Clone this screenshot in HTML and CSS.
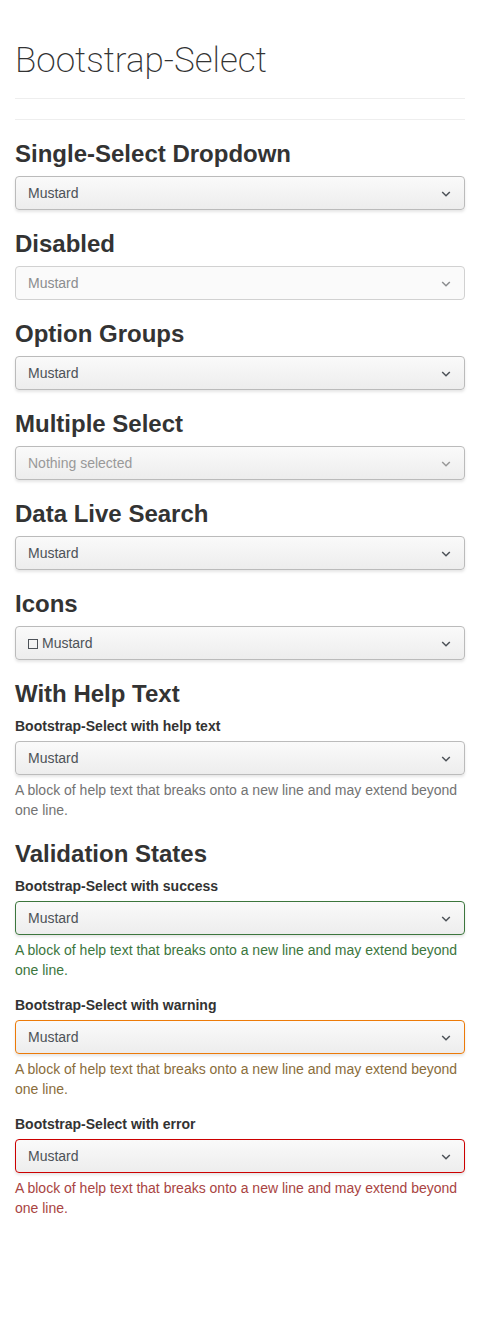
FILE: index.html
```
<!DOCTYPE html>
<html lang="en">
<head>
<meta charset="utf-8">
<meta name="viewport" content="width=device-width, initial-scale=1">
<title>Bootstrap-Select</title>
<link rel="stylesheet" href="styles.css">
</head>
<body>
<svg class="sprite" aria-hidden="true">
  <symbol id="chevron" viewBox="0 0 10 10"><path d="M1.2 3 5 6.8 8.8 3" fill="none" stroke="currentColor" stroke-width="1.5"/></symbol>
</svg>
<main class="container">
  <header class="page-header"><h1 class="title">Bootstrap-Select</h1></header>
  <hr class="rule">

  <h2 class="heading" id="h-single">Single-Select Dropdown</h2>
  <div class="picker">
    <select class="picker-select" aria-labelledby="h-single"><option>Mustard</option><option>Ketchup</option><option>Relish</option></select>
    <svg class="picker-caret" aria-hidden="true"><use href="#chevron"/></svg>
  </div>

  <h2 class="heading" id="h-disabled">Disabled</h2>
  <div class="picker picker-disabled">
    <select class="picker-select" aria-labelledby="h-disabled" disabled><option>Mustard</option></select>
    <svg class="picker-caret" aria-hidden="true"><use href="#chevron"/></svg>
  </div>

  <h2 class="heading" id="h-groups">Option Groups</h2>
  <div class="picker">
    <select class="picker-select" aria-labelledby="h-groups"><optgroup label="Picnic"><option>Mustard</option><option>Ketchup</option><option>Relish</option></optgroup></select>
    <svg class="picker-caret" aria-hidden="true"><use href="#chevron"/></svg>
  </div>

  <h2 class="heading" id="h-multiple">Multiple Select</h2>
  <div class="picker picker-empty">
    <select class="picker-select" aria-labelledby="h-multiple"><option>Nothing selected</option><option>Mustard</option><option>Ketchup</option></select>
    <svg class="picker-caret" aria-hidden="true"><use href="#chevron"/></svg>
  </div>

  <h2 class="heading" id="h-search">Data Live Search</h2>
  <div class="picker">
    <select class="picker-select" aria-labelledby="h-search"><option>Mustard</option><option>Ketchup</option><option>Relish</option></select>
    <svg class="picker-caret" aria-hidden="true"><use href="#chevron"/></svg>
  </div>

  <h2 class="heading" id="h-icons">Icons</h2>
  <div class="picker picker-with-icon">
    <select class="picker-select" aria-labelledby="h-icons"><option>Mustard</option><option>Ketchup</option></select>
    <svg class="picker-icon" viewBox="0 0 10 10" aria-hidden="true"><rect x="0.5" y="0.5" width="9" height="9" fill="none" stroke="currentColor"/></svg>
    <svg class="picker-caret" aria-hidden="true"><use href="#chevron"/></svg>
  </div>

  <h2 class="heading">With Help Text</h2>
  <div class="form-group">
    <label class="label" for="s-help">Bootstrap-Select with help text</label>
    <div class="picker">
      <select class="picker-select" id="s-help" aria-describedby="d-help"><option>Mustard</option><option>Ketchup</option></select>
      <svg class="picker-caret" aria-hidden="true"><use href="#chevron"/></svg>
    </div>
    <p class="help" id="d-help">A block of help text that breaks onto a new line and may extend beyond one line.</p>
  </div>

  <h2 class="heading">Validation States</h2>
  <div class="form-group has-success">
    <label class="label" for="s-success">Bootstrap-Select with success</label>
    <div class="picker">
      <select class="picker-select" id="s-success" aria-describedby="d-success"><option>Mustard</option><option>Ketchup</option></select>
      <svg class="picker-caret" aria-hidden="true"><use href="#chevron"/></svg>
    </div>
    <p class="help" id="d-success">A block of help text that breaks onto a new line and may extend beyond one line.</p>
  </div>
  <div class="form-group has-warning">
    <label class="label" for="s-warning">Bootstrap-Select with warning</label>
    <div class="picker">
      <select class="picker-select" id="s-warning" aria-describedby="d-warning"><option>Mustard</option><option>Ketchup</option></select>
      <svg class="picker-caret" aria-hidden="true"><use href="#chevron"/></svg>
    </div>
    <p class="help" id="d-warning">A block of help text that breaks onto a new line and may extend beyond one line.</p>
  </div>
  <div class="form-group has-error">
    <label class="label" for="s-error">Bootstrap-Select with error</label>
    <div class="picker">
      <select class="picker-select" id="s-error" aria-describedby="d-error"><option>Mustard</option><option>Ketchup</option></select>
      <svg class="picker-caret" aria-hidden="true"><use href="#chevron"/></svg>
    </div>
    <p class="help" id="d-error">A block of help text that breaks onto a new line and may extend beyond one line.</p>
  </div>
</main>
</body>
</html>
```
FILE: styles.css
```
* { box-sizing: border-box; }
body {
  margin: 0;
  background: #fff;
  color: #333;
  font: 14px/20px "Liberation Sans", Arial, sans-serif;
}
.sprite { display: none; }
.container { padding: 40px 15px 100px; }
.page-header {
  padding-bottom: 16px;
  border-bottom: 1px solid #eee;
}
.title {
  margin: 0;
  font: 200 35px/42px Roboto, "Liberation Sans", sans-serif;
}
.rule {
  height: 1px;
  margin: 20px 0;
  border: 0;
  background: #eee;
}
.heading {
  margin: 20px 0 8px;
  font-size: 24px;
  line-height: 28px;
  font-weight: 700;
}
.picker {
  display: grid;
  align-items: center;
  color: #4d5258;
}
.picker-select {
  grid-area: 1 / 1;
  width: 100%;
  height: 34px;
  margin: 0;
  padding: 0 30px 0 12px;
  appearance: none;
  border: 1px solid #bbb;
  border-radius: 4px;
  background: linear-gradient(#fafafa, #ededed);
  box-shadow: 0 2px 3px rgba(3, 3, 3, 0.1);
  color: inherit;
  font: inherit;
  opacity: 1;
}
.picker-caret {
  grid-area: 1 / 1;
  justify-self: end;
  width: 10px;
  height: 10px;
  margin: 2px 14px 0 0;
  pointer-events: none;
}
.picker-icon {
  grid-area: 1 / 1;
  width: 10px;
  height: 10px;
  margin: 2px 0 0 13px;
  pointer-events: none;
}
.picker-with-icon .picker-select { padding-left: 26px; }
.picker-disabled { color: #8b8d8f; }
.picker-disabled .picker-select {
  border-color: #d1d1d1;
  background: #fafafa;
  box-shadow: none;
}
.picker-empty { color: #999; }
.form-group { margin-bottom: 15px; }
.label {
  display: block;
  margin-bottom: 5px;
  font-weight: 700;
}
.help {
  margin: 5px 0 0;
  color: #737373;
}
.has-success .picker-select { border-color: #3c763d; }
.has-success .help { color: #3c763d; }
.has-warning .picker-select { border-color: #ec7a08; }
.has-warning .help { color: #8a6d3b; }
.has-error .picker-select { border-color: #c00; }
.has-error .help { color: #a94442; }
```
